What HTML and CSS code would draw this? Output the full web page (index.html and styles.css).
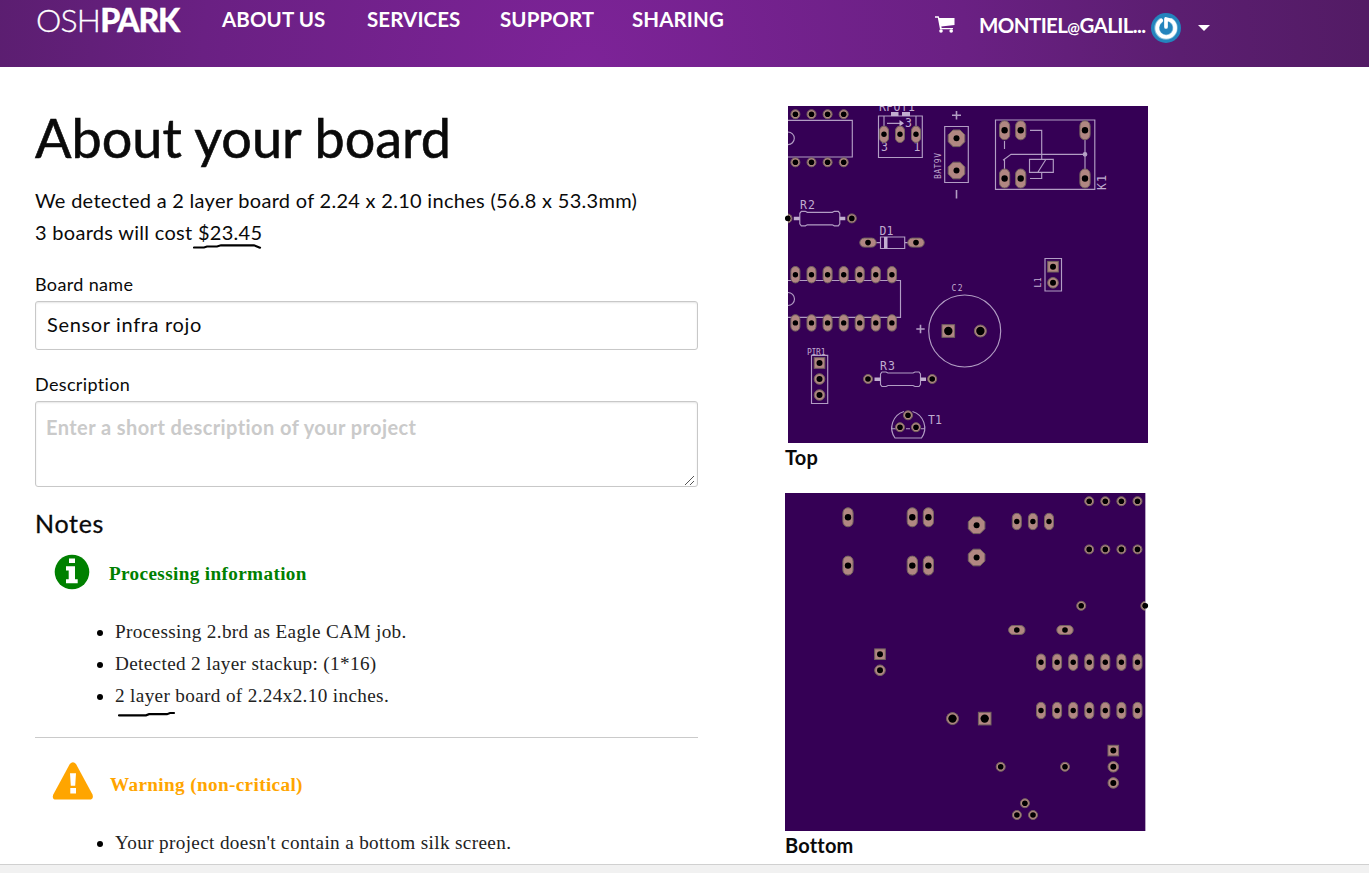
FILE: index.html
```html
<!DOCTYPE html>
<html lang="en">
<head>
<meta charset="utf-8">
<title>OSH Park - About your board</title>
<link rel="stylesheet" href="styles.css">
</head>
<body>
<header class="topbar">
  <a class="logo">OSH<b>PARK</b></a>
  <nav class="nav">
    <a class="nav-about">ABOUT US</a>
    <a class="nav-services">SERVICES</a>
    <a class="nav-support">SUPPORT</a>
    <a class="nav-sharing">SHARING</a>
  </nav>
  <div class="account">
    <svg class="cart" width="20" height="17" viewBox="0 0 20 17"><path d="M0 .3H3.7L4.3 2H19.5V9L6.3 10.6 6.7 12H18V13.2H5L2.8 1.7H0Z"/><circle cx="6" cy="15" r="1.8"/><circle cx="16.2" cy="15" r="1.8"/></svg>
    <span class="user">MONTIEL<small>@</small>GALIL...</span>
    <svg class="avatar" width="30" height="30" viewBox="0 0 30 30"><circle cx="15" cy="15" r="15" fill="#2484bd"/><path d="M9.5 7.8A9.1 9.1 0 1 0 20.5 7.8" fill="none" stroke="#83bddb" stroke-width="5.2" stroke-linecap="round"/><path d="M10.2 7.5A9 9 0 1 0 19.6 7.2L15 6V14" fill="none" stroke="#fff" stroke-width="3.7" stroke-linecap="round" stroke-linejoin="round"/></svg>
    <i class="caret"></i>
  </div>
</header>

<main class="page">
  <section class="details">
    <h1>About your board</h1>
    <div class="summary">
      <p class="detected">We detected a 2 layer board of 2.24 x 2.10 inches (56.8 x 53.3mm)</p>
      <p class="cost">3 boards will cost <span class="marked">$23.45<svg class="scribble scribble-cost" width="70" height="6" viewBox="0 0 70 6"><path d="M1 4.5H11L14 3.5H24L28 2.3H61L67 4.7"/></svg></span></p>
    </div>
    <label class="label-name">Board name</label>
    <div class="field name"><span>Sensor infra rojo</span></div>
    <label class="label-description">Description</label>
    <div class="field description"><span>Enter a short description of your project</span>
      <svg class="grip" width="9" height="9" viewBox="0 0 9 9"><path d="M0 9 9 0M5 9 9 5"/></svg>
    </div>
    <h2>Notes</h2>
    <div class="note info">
      <div class="note-head">
        <svg width="36" height="36" viewBox="0 0 36 36"><circle cx="18" cy="18" r="17.3" fill="#008000"/><path d="M15 4.5H21V9H15ZM12 12.3H21V25.2H23.7V29.3H12V25.2H14.7V16.5H12Z" fill="#fff"/></svg>
        <h3>Processing information</h3>
      </div>
      <ul>
        <li>Processing 2.brd as Eagle CAM job.</li>
        <li>Detected 2 layer stackup: (1*16)</li>
        <li><span class="marked">2 layer<svg class="scribble scribble-layer" width="58" height="6" viewBox="0 0 58 6"><path d="M1 4.3H28L31 3.2H49L52 2H56"/></svg></span> board of 2.24x2.10 inches.</li>
      </ul>
    </div>
    <div class="note warning">
      <div class="note-head">
        <svg width="42" height="38" viewBox="0 0 42 38"><path d="M17.8 2Q21 -1.5 24 2L40.5 32.5Q42 37.5 37.5 37.5H4Q-.5 37.5 1.3 32.5Z" fill="#ffa500"/><path d="M18 11.3H24L23.2 23.8H18.8ZM18.3 26H24V31.5H18.3Z" fill="#fff"/></svg>
        <h3>Warning (non-critical)</h3>
      </div>
      <ul><li>Your project doesn't contain a bottom silk screen.</li></ul>
    </div>
  </section>

  <aside class="previews">
    <figure>
      <svg class="board" width="363" height="337" viewBox="785 106 363 337">
        <defs>
          <g id="small"><circle class="pad" r="4.5"/><circle r="2.8"/></g>
          <g id="round"><circle class="pad" r="5.3"/><circle r="3"/></g>
          <g id="large"><circle class="pad" r="6"/><circle r="4.2"/></g>
          <g id="square"><rect class="pad" x="-5.3" y="-5.3" width="10.6" height="10.6"/><circle r="3"/></g>
          <g id="bigsquare"><rect class="pad" x="-6.3" y="-6.3" width="12.6" height="12.6"/><circle r="4.2"/></g>
          <g id="oval"><rect class="pad" x="-4.5" y="-8.2" width="9" height="16.4" rx="4.5"/><circle r="2.7"/></g>
          <g id="flat"><rect class="pad" x="-8.2" y="-4.5" width="16.4" height="9" rx="4.5"/><circle r="2.8"/></g>
          <g id="long"><rect class="pad" x="-5.1" y="-9.5" width="10.2" height="19" rx="5.1"/><circle r="3.2"/></g>
          <g id="octagon"><path class="pad" d="M-3.5-8.3H3.5L8.3-3.5V3.5L3.5 8.3H-3.5L-8.3 3.5V-3.5Z"/><circle r="3"/></g>
          <g id="row4"><use href="#small"/><use href="#small" x="16.1"/><use href="#small" x="32.2"/><use href="#small" x="48.3"/></g>
          <g id="row7"><use href="#oval"/><use href="#oval" x="16.1"/><use href="#oval" x="32.2"/><use href="#oval" x="48.3"/><use href="#oval" x="64.3"/><use href="#oval" x="80.4"/><use href="#oval" x="96.5"/></g>
          <g id="resistor"><path class="silk" d="M2 0H6L8 1H33L35 0H39L40.5 2V12.5L39 14.5H35L33 13.5H8L6 14.5H2L.5 12.5V2Z"/><path class="fill" d="M-5.5 5.5H.5V9H-5.5ZM40.5 5.5H46V9H40.5Z"/></g>
          <clipPath id="topclip"><rect x="788" y="106" width="360" height="337"/></clipPath>
          <clipPath id="bottomclip"><rect x="785" y="493" width="360" height="338"/></clipPath>
        </defs>
        <rect x="788" y="106" width="360" height="337" fill="#350055"/>
        <g clip-path="url(#topclip)">
          <g class="silk">
            <path d="M788 120.3H852.3V157H788M788 132A6.3 6.3 0 0 1 788 144.6M788 280.5H900.5V317.3H788M788 292.5A6.3 6.3 0 0 1 788 305.5"/>
            <path d="M878.5 116H922.3V157.5H878.5ZM884 116V127M916 116V127M887 123.3H900"/>
            <path d="M944.7 126.5H968.3V182.5H944.7Z"/>
            <path class="strong" d="M956.5 111V119.5M952 115.2H961M956.5 190V198.5"/>
            <path d="M880.5 237H904.7V248.5H880.5ZM876 242.6H880.5M904.7 242.6H909"/>
            <path d="M995.5 120H1094.8V189.3H995.5ZM1030 130.3H1041.7V159M1041.7 172V178.5H1030M1004.5 141V149M1004.5 169V159.5M1003 160.3 1011 154.3H1085M1085 138V170M1029.5 159.3H1053.3V172.3H1029.5ZM1038 172 1046 159.3"/>
            <circle cx="1085" cy="154.3" r="1.8" fill="#b9a4c9"/>
            <path d="M1045 258.5H1061.5V291H1045Z"/>
            <circle cx="964.7" cy="331" r="36"/>
            <path class="strong" d="M916.3 329H924.7M920.5 324.8V333.2"/>
            <path d="M811.5 355.3H827.7V403.5H811.5Z"/>
            <path d="M904 411.5A17.2 17.2 0 0 0 895 438H921.5A17.2 17.2 0 0 0 912.5 411.5M891 428.7H896M906 428.7H910M921 428.7H925"/>
          </g>
          <path class="fill" d="M891 112H898.5V116H891ZM902 112H910V116H902ZM899.5 120 904 123.3 899.5 126.5ZM884 237H887.5V248.5H884Z"/>
          <use href="#resistor" x="799.3" y="211.3"/><use href="#resistor" x="880" y="372"/>
          <g class="label">
            <text x="879" y="110.5" textLength="36">RPOT1</text><text x="905" y="127.3">3</text><text x="881" y="151">3</text><text x="913.5" y="151">1</text>
            <text x="800" y="209.3" textLength="15">R2</text><text x="879.5" y="235" textLength="14">D1</text>
            <text x="880" y="369.7" textLength="15">R3</text><text x="928" y="423.5" textLength="14">T1</text>
            <text transform="translate(1106 190) rotate(-90)" textLength="15">K1</text>
          </g>
          <g class="label tiny">
            <text transform="translate(940.5 179) rotate(-90)" textLength="26">BAT9V</text><text x="951.5" y="291" textLength="11">C2</text><text x="807" y="355" textLength="18.5">PIR1</text><text transform="translate(1041.3 287.5) rotate(-90)" textLength="10">L1</text>
          </g>
          <use href="#row4" x="795.4" y="114.2"/><use href="#row4" x="795.4" y="162.3"/>
          <use href="#oval" x="884" y="134.3"/><use href="#oval" x="900" y="134.3"/><use href="#oval" x="916" y="134.3"/>
          <use href="#octagon" x="956.5" y="138.3"/><use href="#octagon" x="956.5" y="170.5"/>
          <use href="#long" x="1004.6" y="130.3"/><use href="#long" x="1020.7" y="130.3"/><use href="#long" x="1085" y="130.3"/>
          <use href="#long" x="1004.6" y="178.5"/><use href="#long" x="1020.7" y="178.5"/><use href="#long" x="1085" y="178.5"/>
          <use href="#small" x="787.5" y="218.4"/><use href="#small" x="851.8" y="218.4"/>
          <use href="#flat" x="868" y="242.6"/><use href="#flat" x="916" y="242.6"/>
          <use href="#row7" x="795.4" y="274.7"/><use href="#row7" x="795.4" y="322.9"/>
          <use href="#square" x="1053" y="266.7"/><use href="#round" x="1053" y="282.8"/>
          <use href="#bigsquare" x="948.3" y="331"/><use href="#large" x="980.4" y="331"/>
          <use href="#square" x="819.5" y="363"/><use href="#round" x="819.5" y="379"/><use href="#round" x="819.5" y="395"/>
          <use href="#small" x="868" y="379"/><use href="#small" x="932.2" y="379"/>
          <use href="#small" x="908" y="415.3"/><use href="#small" x="900" y="427.2"/><use href="#small" x="916" y="427.2"/>
        </g>
        <circle cx="787.7" cy="218.4" r="2.8"/>
      </svg>
      <figcaption class="cap-top">Top</figcaption>
    </figure>
    <figure>
      <svg class="board" width="364" height="338" viewBox="785 493 364 338">
        <rect x="785" y="493" width="360" height="338" fill="#350055"/>
        <path d="M1145.5 493V831" stroke="#b7a6c3"/>
        <g clip-path="url(#bottomclip)">
          <use href="#long" x="848" y="517.3"/><use href="#long" x="912.3" y="517.3"/><use href="#long" x="928.4" y="517.3"/>
          <use href="#long" x="848" y="565.6"/><use href="#long" x="912.3" y="565.6"/><use href="#long" x="928.4" y="565.6"/>
          <use href="#octagon" x="976.6" y="525.3"/><use href="#octagon" x="976.6" y="557.5"/>
          <use href="#oval" x="1016.8" y="521.5"/><use href="#oval" x="1032.9" y="521.5"/><use href="#oval" x="1049" y="521.5"/>
          <use href="#row4" x="1089.2" y="501.2"/><use href="#row4" x="1089.2" y="549.4"/>
          <use href="#small" x="1081.2" y="605.8"/><use href="#small" x="1145.3" y="605.8"/>
          <use href="#flat" x="1016.8" y="630"/><use href="#flat" x="1065" y="630"/>
          <use href="#row7" x="1041" y="662.2"/><use href="#row7" x="1041" y="710.5"/>
          <use href="#square" x="880" y="654.2"/><use href="#round" x="880" y="670.3"/>
          <use href="#large" x="952.5" y="718.6"/><use href="#bigsquare" x="984.7" y="718.6"/>
          <use href="#square" x="1113.3" y="750.6"/><use href="#round" x="1113.3" y="766.8"/><use href="#round" x="1113.3" y="782.9"/>
          <use href="#small" x="1000.7" y="766.8"/><use href="#small" x="1065" y="766.8"/>
          <use href="#small" x="1024.9" y="803.2"/><use href="#small" x="1016.9" y="815"/><use href="#small" x="1033" y="815"/>
        </g>
        <circle cx="1145.3" cy="605.8" r="2.8"/>
      </svg>
      <figcaption class="cap-bottom">Bottom</figcaption>
    </figure>
  </aside>
</main>
<footer class="strip"></footer>
</body>
</html>
```
FILE: styles.css
```css
* { box-sizing: border-box; }
body {
  margin: 0;
  height: 873px;
  overflow: hidden;
  display: flex;
  flex-direction: column;
  background: #fff;
  color: #0a0a0a;
  font: 20px/32px Lato, sans-serif;
}
h1, h2, h3, p, ul, figure { margin: 0; padding: 0; }
svg { display: block; }

.topbar {
  flex: none;
  height: 67px;
  display: flex;
  align-items: flex-start;
  padding-left: 36px;
  color: #fff;
  background: radial-gradient(ellipse 850px 850px at 585px 67px, #7d2398 0%, #6a2083 45%, #5b1e70 70%, #501a61 100%);
}
.logo { width: 185px; margin-top: 4px; font-size: 32px; line-height: 32px; font-weight: 300; letter-spacing: -0.8px; -webkit-text-stroke: .3px #fff; }
.logo b { font-weight: 900; letter-spacing: -1.3px; }
.nav { display: flex; width: 714px; margin-top: 3px; padding-left: 1px; font-weight: 700; font-size: 20.5px; letter-spacing: .1px; white-space: nowrap; }
.nav-about { width: 145px; }
.nav-services { width: 133px; }
.nav-support { width: 132px; }
.account { display: flex; align-items: flex-start; font-weight: 700; font-size: 20.5px; }
.cart { fill: #fff; margin-top: 16px; }
.user { width: 172px; margin: 9px 0 0 24px; white-space: nowrap; letter-spacing: -0.6px; }
.user small { font-size: 15px; }
.avatar { margin-top: 13px; }
.caret { margin: 25px 0 0 17px; border: 6px solid transparent; border-top-color: #fff; border-bottom: 0; }

.page { flex: none; display: flex; height: 797px; overflow: hidden; }
.details { width: 663px; margin-left: 35px; padding-top: 35px; }
h1 { font-size: 54px; line-height: 72px; font-weight: 400; white-space: nowrap; letter-spacing: 0; -webkit-text-stroke: .6px #0a0a0a; }
.summary { margin-top: 10px; white-space: nowrap; letter-spacing: .29px; }
.marked { position: relative; }
.scribble { position: absolute; fill: none; stroke: #000; stroke-width: 2.2; stroke-linecap: round; }
.scribble-cost { left: -5px; top: 23px; }
.scribble-layer { left: 3px; top: 26px; }
label { display: block; font-size: 18px; line-height: 32px; letter-spacing: .35px; }
.label-name { margin-top: 20px; }
.label-description { margin-top: 18px; }
.field { position: relative; border: 1px solid #c8c8c8; border-radius: 3px; box-shadow: inset 0 1px 2px rgba(10, 10, 10, .1); padding: 7px 11px; }
.name { height: 49px; margin-top: 1px; letter-spacing: .65px; }
.name span { position: relative; top: -1px; }
.description { height: 86px; margin-top: 1px; padding: 9px 10px; color: #cacaca; font-weight: 700; letter-spacing: .42px; }
.grip { position: absolute; right: 3px; bottom: 1px; stroke: #555; stroke-width: 1; }
h2 { margin-top: 17px; margin-bottom: 1px; font-size: 25px; line-height: 38px; font-weight: 400; letter-spacing: .7px; -webkit-text-stroke: .3px #0a0a0a; }
.note { font-family: "Liberation Serif", serif; }
.note-head { display: flex; }
.note h3 { font-size: 19.2px; line-height: 32px; white-space: nowrap; letter-spacing: .36px; }
.info .note-head { padding: 11px 0 0 19px; }
.info h3 { color: #008000; margin: 4px 0 0 19px; }
.note ul { margin-top: 26px; padding-left: 80px; font-size: 19.2px; line-height: 32px; white-space: nowrap; letter-spacing: .35px; }
.note li { color: #222; }
.note li::marker { color: #000; }
.info { height: 195px; border-bottom: 1px solid #cacaca; }
.warning .note-head { padding: 24px 0 0 17px; }
.warning h3 { color: #ffa500; margin: 7px 0 0 16px; }

.previews { margin-left: 87px; padding-top: 39px; }
.previews figure { height: 387px; }
figcaption { height: 30px; line-height: 28px; font-weight: 700; letter-spacing: .2px; }
.pad { fill: #b18782; stroke: #73635f; stroke-width: 1; }
.silk { fill: none; stroke: #b29dc4; stroke-width: 1.15; }
.strong { stroke-width: 1.6; }
.fill { fill: #c2aed0; }
.label { fill: #c0acd0; font: 12px "DejaVu Sans Mono", monospace; font-size: 11.5px; }
.tiny { font-size: 8px; }
.strip { flex: none; height: 9px; border-top: 1px solid #d0d0d0; background: #f1f1f1; }
```
